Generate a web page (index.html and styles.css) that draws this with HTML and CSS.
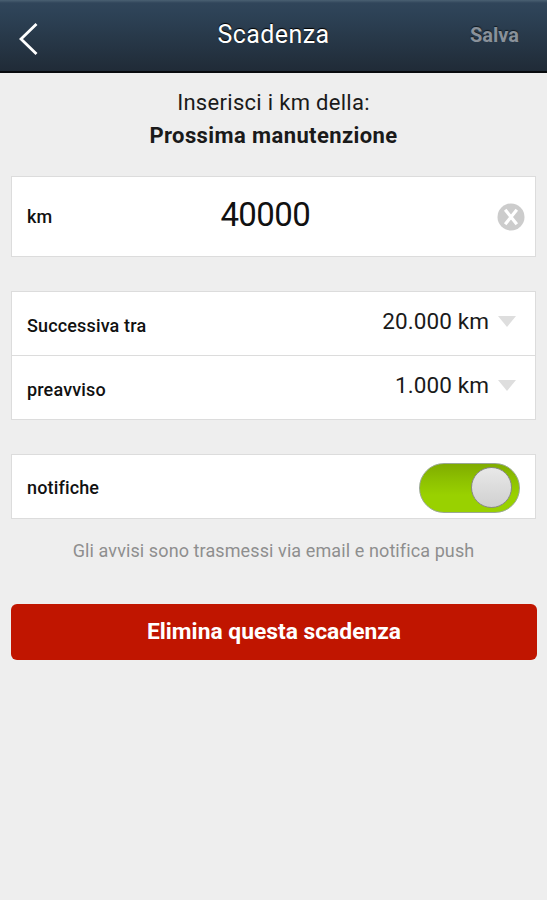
FILE: index.html
```html
<!DOCTYPE html>
<html lang="it">
	<head>
		<meta charset="UTF-8" />
		<meta name="viewport" content="width=device-width, initial-scale=1.0" />
		<title>Scadenza</title>
		<link rel="stylesheet" href="styles.css">
	</head>
	<body>
		<header class="navbar">
			<a class="back-btn" aria-label="Indietro">
				<svg width="20" height="34" viewBox="0 0 20 34">
					<path d="M17.5 2 L2 17 L17.5 32" fill="none" stroke="#fff" stroke-width="2.8" />
				</svg>
			</a>
			<h1 class="title">Scadenza</h1>
			<a class="save-btn">Salva</a>
		</header>
		<main class="content">
			<div class="intro">
				<p class="intro-text">Inserisci i km della:</p>
				<p class="intro-name">Prossima manutenzione</p>
			</div>
			<div class="card km-card">
				<span class="label">km</span>
				<span class="km-value">40000</span>
				<svg class="clear-btn" width="28" height="28" viewBox="0 0 28 28">
					<circle cx="14" cy="14" r="13.5" fill="#ccc" />
					<path d="M8.2 6.8 L19.8 21.2 M19.8 6.8 L8.2 21.2" stroke="#fff" stroke-width="3.2" />
				</svg>
			</div>
			<div class="card">
				<div class="row">
					<span class="label">Successiva tra</span>
					<span class="select">20.000 km</span>
				</div>
				<div class="row">
					<span class="label">preavviso</span>
					<span class="select">1.000 km</span>
				</div>
			</div>
			<div class="card switch-card">
				<span class="label">notifiche</span>
				<div class="switch"><div class="knob"></div></div>
			</div>
			<p class="hint">Gli avvisi sono trasmessi via email e notifica push</p>
			<button class="delete-btn" type="button">Elimina questa scadenza</button>
		</main>
	</body>
</html>
```

FILE: styles.css
```css
* {
	box-sizing: border-box;
}
body {
	margin: 0;
	min-height: 900px;
	background: #eee;
	color: #1a1a1a;
	font-family: Roboto, "Liberation Sans", sans-serif;
}
p,
h1 {
	margin: 0;
}
.navbar {
	height: 73px;
	display: grid;
	grid-template-columns: 1fr auto 1fr;
	align-items: center;
	padding: 0 28px 0 19px;
	background: linear-gradient(#4a6072 0, #30455a 3px, #2d4256 14px, #202b37 100%);
	border-bottom: 2px solid #080b0e;
	color: #fff;
}
.back-btn {
	display: flex;
	padding-top: 7px;
}
.title {
	padding: 0 0 1px 9px;
	font-size: 25px;
	font-weight: 400;
	line-height: 30px;
	letter-spacing: 0.4px;
	text-shadow: 0 -1px 1px #000;
}
.save-btn {
	justify-self: end;
	padding-bottom: 2px;
	color: #89919a;
	font-size: 20px;
	font-weight: 700;
	text-shadow: 0 -1px 1px #111a22;
}
.content {
	padding: 13px 11px 0 11px;
}
.intro {
	height: 90px;
	font-size: 22px;
	line-height: 33px;
	text-align: center;
}
.intro-text {
	letter-spacing: 0.3px;
}
.intro-name {
	font-weight: 700;
	letter-spacing: 0.4px;
}
.card {
	margin-bottom: 34px;
	background: #fff;
	border: 1px solid #dcdcdc;
}
.label {
	color: #111;
	font-size: 18px;
	font-weight: 500;
	letter-spacing: 0.15px;
}
.km-card {
	height: 81px;
	display: flex;
	align-items: center;
	padding: 0 10px 0 15px;
}
.km-card .label {
	padding-bottom: 1px;
}
.km-value {
	flex: 1;
	padding: 0 0 4px 168px;
	color: #111;
	font-size: 33px;
	letter-spacing: -0.6px;
}
.row {
	height: 63px;
	display: flex;
	align-items: center;
	justify-content: space-between;
	padding: 4px 19px 0 15px;
}
.row + .row {
	height: 64px;
	border-top: 1px solid #dcdcdc;
}
.select {
	display: flex;
	align-items: center;
	padding-bottom: 9px;
	font-size: 22.5px;
	letter-spacing: 0.1px;
}
.select::after {
	content: "";
	margin-left: 9px;
	border: 9px solid transparent;
	border-top: 11px solid #dedede;
	border-bottom: 0;
}
.switch-card {
	height: 65px;
	margin-bottom: 20px;
	display: flex;
	align-items: center;
	justify-content: space-between;
	padding: 2px 15px 0 15px;
}
.switch {
	width: 101px;
	height: 50px;
	display: flex;
	align-items: center;
	justify-content: flex-end;
	padding-right: 7px;
	background: linear-gradient(#80ac00, #8ec200 35%, #99d100 65%);
	border: 1px solid #9aa894;
	border-radius: 25px;
}
.knob {
	width: 41px;
	height: 41px;
	background: linear-gradient(#e8e8e8, #d0d0d0);
	border: 1.5px solid #888;
	border-radius: 50%;
}
.hint {
	color: #8e8e8e;
	font-size: 18px;
	line-height: 24px;
	letter-spacing: 0.1px;
	text-align: center;
}
.delete-btn {
	display: block;
	width: 526px;
	height: 56px;
	margin-top: 41px;
	padding: 0 0 2px;
	background: #c01500;
	border: 0;
	border-radius: 6px;
	color: #fff;
	font-family: inherit;
	font-size: 22.8px;
	font-weight: 700;
}
```
